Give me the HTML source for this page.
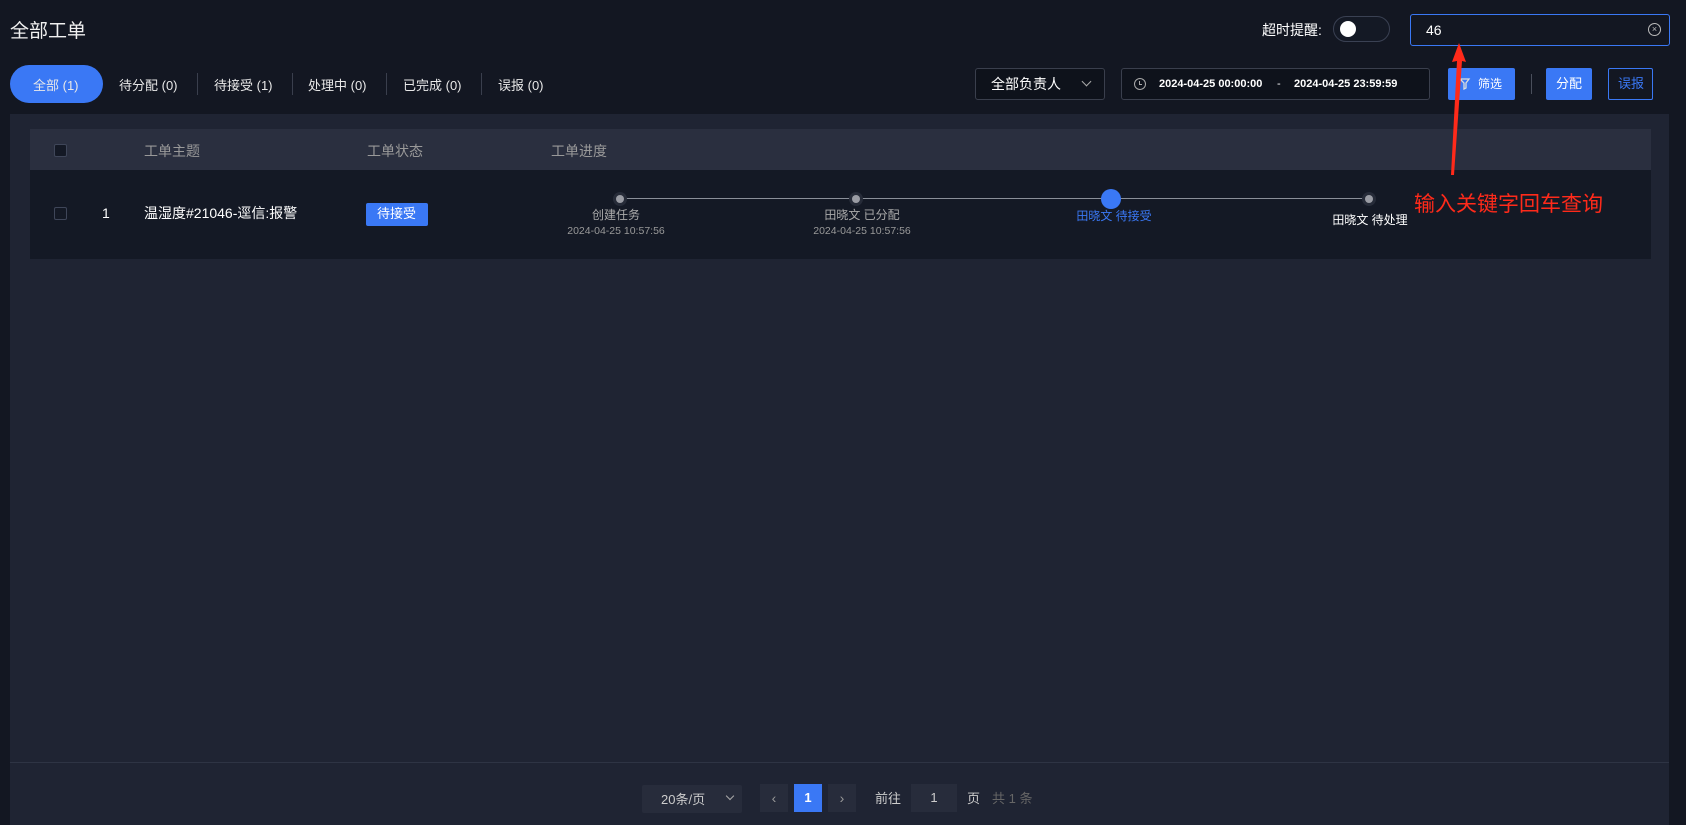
<!DOCTYPE html>
<html><head><meta charset="utf-8"><style>
*{margin:0;padding:0;box-sizing:border-box}
body{width:1686px;height:825px;background:#131722;font-family:"Liberation Sans","Noto Sans CJK SC",sans-serif;color:#fff;position:relative;overflow:hidden;line-height:1.15}
.a{position:absolute}
.t{font-size:13px;white-space:nowrap}
.tab{position:absolute;top:79px;font-size:13px;color:#e8e8e8}
.sep{position:absolute;top:73px;width:1px;height:22px;background:#3a3f4d}
.lbl{position:absolute;font-size:12px;white-space:nowrap;transform:translateX(-50%);text-align:center}
</style></head><body>
<div class="a" style="left:10px;top:21px;font-size:19px;color:#f0f0f0">全部工单</div>
<div class="a t" style="left:1262px;top:22px;font-size:14px">超时提醒:</div>
<div class="a" style="left:1333px;top:16px;width:57px;height:26px;border:1px solid #3a4153;border-radius:13px;background:#141925"><div class="a" style="left:6px;top:4px;width:16px;height:16px;border-radius:50%;background:#fff"></div></div>
<div class="a" style="left:1410px;top:14px;width:260px;height:32px;border:1px solid #3a78f5;border-radius:3px;background:#131722"><span class="a" style="left:15px;top:7px;font-size:14px">46</span><div class="a" style="left:237px;top:8px;width:13px;height:13px;border:1.5px solid #bbb;border-radius:50%;font-size:9px;line-height:10px;text-align:center;color:#bbb">×</div></div>
<div class="a" style="left:10px;top:65px;width:93px;height:38px;border-radius:19px;background:#3a78f5"></div>
<div class="tab" style="left:33px">全部 (1)</div>
<div class="tab" style="left:119px">待分配 (0)</div><div class="sep" style="left:197px"></div>
<div class="tab" style="left:214px">待接受 (1)</div><div class="sep" style="left:292px"></div>
<div class="tab" style="left:308px">处理中 (0)</div><div class="sep" style="left:386px"></div>
<div class="tab" style="left:403px">已完成 (0)</div><div class="sep" style="left:481px"></div>
<div class="tab" style="left:498px">误报 (0)</div>
<div class="a" style="left:975px;top:68px;width:130px;height:32px;border:1px solid #3a3f4d;border-radius:3px;background:#0e121b"><span class="a t" style="left:15px;top:7px;font-size:14px">全部负责人</span><span class="a" style="left:107px;top:9px;width:7px;height:7px;border-right:1px solid #aaa;border-bottom:1px solid #aaa;transform:rotate(45deg)"></span></div>
<div class="a" style="left:1121px;top:68px;width:309px;height:32px;border:1px solid #3a3f4d;border-radius:3px;background:#0e121b"><span class="a" style="left:12px;top:9px;width:12px;height:12px;border:1px solid #aaa;border-radius:50%"></span><span class="a" style="left:17px;top:12px;width:1px;height:4px;background:#aaa"></span><span class="a" style="left:17px;top:15px;width:3px;height:1px;background:#aaa"></span><span class="a t" style="left:37px;top:9px;font-size:11px;font-weight:bold">2024-04-25 00:00:00</span><span class="a t" style="left:155px;top:9px;font-size:11px">-</span><span class="a t" style="left:172px;top:9px;font-size:11px;font-weight:bold">2024-04-25 23:59:59</span></div>
<div class="a" style="left:1448px;top:68px;width:67px;height:32px;background:#3a78f5;border-radius:2px"><svg class="a" style="left:11px;top:10px" width="12" height="12"><path d="M1 1H10L7 5V10L5 11V5Z" fill="none" stroke="#ddd" stroke-width="1.3"/></svg><span class="a t" style="left:30px;top:10px;font-size:12px">筛选</span></div>
<div class="a" style="left:1531px;top:74px;width:1px;height:20px;background:#4a4f5c"></div>
<div class="a" style="left:1546px;top:68px;width:46px;height:32px;background:#3a78f5;border-radius:2px"><span class="a t" style="left:10px;top:9px">分配</span></div>
<div class="a" style="left:1608px;top:68px;width:45px;height:32px;border:1px solid #3a78f5;border-radius:2px"><span class="a t" style="left:9px;top:8px;color:#3a78f5">误报</span></div>
<div class="a" style="left:10px;top:114px;width:1659px;height:711px;background:#1f2433"></div>
<div class="a" style="left:10px;top:762px;width:1659px;height:1px;background:#2e3444"></div>
<div class="a" style="left:30px;top:129px;width:1621px;height:41px;background:#2a2f3f"></div>
<div class="a" style="left:30px;top:170px;width:1621px;height:89px;background:#141925"></div>
<div class="a" style="left:54px;top:144px;width:13px;height:13px;border:1px solid #3f4659;background:#141925;border-radius:2px"></div>
<div class="a t" style="left:144px;top:143px;color:#999;font-size:14px">工单主题</div>
<div class="a t" style="left:367px;top:143px;color:#999;font-size:14px">工单状态</div>
<div class="a t" style="left:551px;top:143px;color:#999;font-size:14px">工单进度</div>
<div class="a" style="left:54px;top:207px;width:13px;height:13px;border:1px solid #3f4659;border-radius:2px"></div>
<div class="a t" style="left:102px;top:205px;font-size:14px">1</div>
<div class="a t" style="left:144px;top:205px;font-size:14px">温湿度#21046-逕信:报警</div>
<div class="a" style="left:366px;top:203px;width:62px;height:23px;background:#3a78f5;border-radius:2px"><span class="a t" style="left:11px;top:4px;font-size:13px">待接受</span></div>
<div class="a" style="left:620px;top:198px;width:749px;height:1px;background:#8a8f99"></div>
<div class="a" style="left:613px;top:192px;width:14px;height:14px;border-radius:50%;background:#262b38"></div><div class="a" style="left:616px;top:195px;width:8px;height:8px;border-radius:50%;background:#9a9ca4"></div>
<div class="a" style="left:849px;top:192px;width:14px;height:14px;border-radius:50%;background:#262b38"></div><div class="a" style="left:852px;top:195px;width:8px;height:8px;border-radius:50%;background:#9a9ca4"></div>
<div class="a" style="left:1101px;top:189px;width:20px;height:20px;border-radius:50%;background:#3a78f5"></div>
<div class="a" style="left:1362px;top:192px;width:14px;height:14px;border-radius:50%;background:#262b38"></div><div class="a" style="left:1365px;top:195px;width:8px;height:8px;border-radius:50%;background:#9a9ca4"></div>
<div class="lbl" style="left:616px;top:209px;color:#aaa">创建任务</div>
<div class="lbl" style="left:616px;top:225px;color:#999;font-size:10.5px">2024-04-25 10:57:56</div>
<div class="lbl" style="left:862px;top:209px;color:#aaa">田晓文 已分配</div>
<div class="lbl" style="left:862px;top:225px;color:#999;font-size:10.5px">2024-04-25 10:57:56</div>
<div class="lbl" style="left:1114px;top:210px;color:#3a78f5">田晓文 待接受</div>
<div class="lbl" style="left:1370px;top:214px;color:#fff">田晓文 待处理</div>
<div class="a t" style="left:1414px;top:193px;font-size:21px;color:#ff2a1a">输入关键字回车查询</div>
<svg class="a" style="left:1440px;top:40px" width="40" height="140"><polygon points="19,3 26,22 22,21 14,135 11,135 17,21 12,22" fill="#ff2a1a"/></svg>
<div class="a" style="left:642px;top:785px;width:100px;height:28px;background:#272c3b;border-radius:2px"><span class="a t" style="left:19px;top:8px;color:#ccc;font-size:13px">20条/页</span><span class="a" style="left:85px;top:8px;width:6px;height:6px;border-right:1px solid #aaa;border-bottom:1px solid #aaa;transform:rotate(45deg)"></span></div>
<div class="a" style="left:760px;top:784px;width:28px;height:28px;background:#272c3b;color:#999;font-size:14px;text-align:center;line-height:28px">‹</div>
<div class="a" style="left:794px;top:784px;width:28px;height:28px;background:#3a78f5;font-size:13px;font-weight:bold;text-align:center;line-height:28px">1</div>
<div class="a" style="left:828px;top:784px;width:28px;height:28px;background:#272c3b;color:#999;font-size:14px;text-align:center;line-height:28px">›</div>
<div class="a t" style="left:875px;top:792px;color:#ccc">前往</div>
<div class="a" style="left:911px;top:784px;width:46px;height:28px;background:#272c3b;font-size:13px;text-align:center;line-height:28px;color:#ccc">1</div>
<div class="a t" style="left:967px;top:792px;color:#ccc">页</div>
<div class="a t" style="left:992px;top:792px;color:#666">共 1 条</div>
</body></html>
